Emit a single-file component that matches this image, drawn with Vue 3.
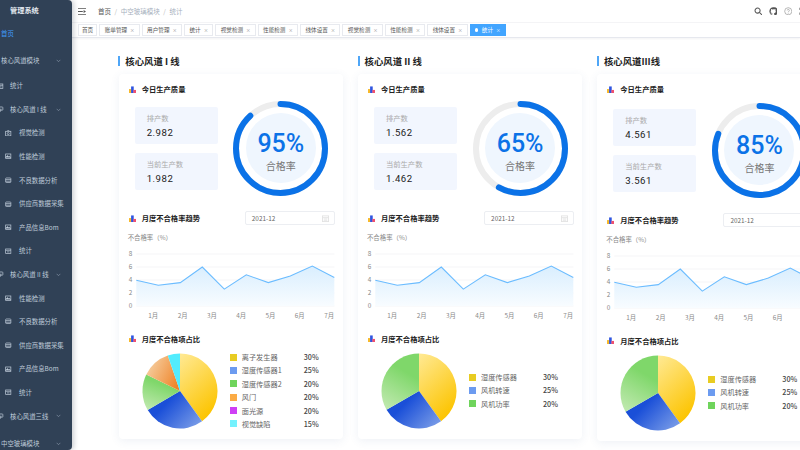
<script setup>
const menu = [
  { label: '首页', type: 'active' },
  { label: '核心风道模块', type: 'module', arrow: true },
  { label: '统计', type: 'sub', icon: 'doc' },
  { label: '核心风道 I 线', type: 'sub', icon: 'line', arrow: true },
  { label: '视觉检测', type: 'leaf', icon: 'camera' },
  { label: '性能检测', type: 'leaf', icon: 'image' },
  { label: '不良数据分析', type: 'leaf', icon: 'box' },
  { label: '供应商数据采集', type: 'leaf', icon: 'box' },
  { label: '产品信息Bom', type: 'leaf', icon: 'image' },
  { label: '统计', type: 'leaf', icon: 'doc' },
  { label: '核心风道 II 线', type: 'sub', icon: 'line', arrow: true },
  { label: '性能检测', type: 'leaf', icon: 'image' },
  { label: '不良数据分析', type: 'leaf', icon: 'box' },
  { label: '供应商数据采集', type: 'leaf', icon: 'box' },
  { label: '产品信息Bom', type: 'leaf', icon: 'image' },
  { label: '统计', type: 'leaf', icon: 'doc' },
  { label: '核心风道三线', type: 'sub', icon: 'line', arrow: true },
  { label: '中空玻璃模块', type: 'module', arrow: true },
]

const tags = ['账单管理', '用户管理', '统计', '视觉检测', '性能检测', '线体设置', '视觉检测', '性能检测', '线体设置']

const yellow = { color: '#e8cc22', fill: 'url(#pieYellow)' }
const blue = { color: '#6c9bf0', fill: 'url(#pieBlue)' }
const green = { color: '#6fd45c', fill: 'url(#pieGreen)' }
const orange = { color: '#fbab45', fill: 'url(#pieOrange)' }
const purple = { color: '#cf3ff5', fill: '#cf3ff5' }
const cyan = { color: '#74f1fd', fill: '#52ecfd' }

const shortLegend = [
  { name: '湿度传感器', pct: '30%', deg: 144, ...yellow },
  { name: '风机转速', pct: '25%', deg: 96, ...blue },
  { name: '风机功率', pct: '20%', deg: 120, ...green },
]

const lines = [
  {
    title: '核心风道 I 线', plan: '2.982', current: '1.982', rate: '95%', arc: 0.88,
    legend: [
      { name: '离子发生器', pct: '30%', deg: 144, ...yellow },
      { name: '湿度传感器1', pct: '25%', deg: 95.5, ...blue },
      { name: '湿度传感器2', pct: '20%', deg: 56.5, ...green },
      { name: '风门', pct: '20%', deg: 45, ...orange },
      { name: '面光源', pct: '20%', deg: 0, ...purple },
      { name: '视觉缺陷', pct: '15%', deg: 19, ...cyan },
    ],
  },
  { title: '核心风道 II 线', plan: '1.562', current: '1.462', rate: '65%', arc: 0.58, legend: shortLegend },
  { title: '核心风道III线', plan: '4.561', current: '3.561', rate: '85%', arc: 0.81, legend: shortLegend, tall: true },
]

const ticks = [8, 6, 4, 2, 0]
const months = ['1月', '2月', '3月', '4月', '5月', '6月', '7月']
const rates = [3.95, 3.2, 3.6, 6, 2.6, 4.8, 3.6, 4.6, 6.15, 4.4]

const plotX = (i) => 17.3 + i * 22
const plotY = (v) => 75 - v * 6.5
const linePoints = rates.map((v, i) => `${plotX(i)},${plotY(v)}`).join(' ')
const areaPoints = `${plotX(0)},${plotY(0)} ${linePoints} ${plotX(9)},${plotY(0)}`

const RING = 2 * Math.PI * 44.5

// slices start at 12 o'clock and run clockwise
function slices(legend) {
  let from = 0
  const out = []
  for (const item of legend) {
    if (item.deg > 0) {
      const a = ((from - 90) * Math.PI) / 180
      const b = ((from + item.deg - 90) * Math.PI) / 180
      const large = item.deg > 180 ? 1 : 0
      out.push({
        fill: item.fill,
        d: `M38 38L${38 + 37.5 * Math.cos(a)} ${38 + 37.5 * Math.sin(a)}A37.5 37.5 0 ${large} 1 ${38 + 37.5 * Math.cos(b)} ${38 + 37.5 * Math.sin(b)}Z`,
      })
    }
    from += item.deg
  }
  return out
}
</script>

<template>
  <div class="app">
    <aside class="sidebar">
      <div class="logo">管理系统</div>
      <div v-for="(item, i) in menu" :key="i" class="menu-item" :class="item.type">
        <svg v-if="item.icon" class="menu-icon" viewBox="0 0 10 10" fill="none" stroke="#bfcbd9" stroke-width="1.1">
          <template v-if="item.icon === 'doc'">
            <rect x="1" y="1.5" width="8" height="7" />
            <path d="M1 3.6h8M3 6h4" />
          </template>
          <template v-else-if="item.icon === 'line'">
            <rect x="1" y="1.5" width="8" height="5" rx="1" />
            <path d="M5 6.5v2.5M3 5h4" />
          </template>
          <template v-else-if="item.icon === 'camera'">
            <rect x="1" y="2" width="8" height="7" />
            <circle cx="5" cy="5.5" r="1.6" />
            <path d="M3.5 1h3" />
          </template>
          <template v-else-if="item.icon === 'image'">
            <rect x="1" y="1.5" width="8" height="7" />
            <path d="M1 7l2.8-3 2 2 1-1L9 7" fill="#bfcbd9" />
          </template>
          <template v-else>
            <rect x="1" y="1.5" width="8" height="7" rx="1" />
            <path d="M1 4h8M1 6.5h8" />
          </template>
        </svg>
        <span class="menu-label">{{ item.label }}</span>
        <svg v-if="item.arrow" class="menu-arrow" viewBox="0 0 8 5" fill="none" stroke="#8f9db0" stroke-width="1">
          <path d="M1 1l3 3 3-3" />
        </svg>
      </div>
    </aside>

    <div class="main">
      <header class="navbar">
        <svg class="hamburger" viewBox="0 0 10 8" fill="#555">
          <path d="M0 0h10v1H0zM0 3.5h6v1H0zM0 7h10v1H0zM7 2.2l3 1.8-3 1.8z" />
        </svg>
        <span class="crumb">首页</span>
        <span class="crumb-sep">/</span>
        <span class="crumb muted">中空玻璃模块</span>
        <span class="crumb-sep">/</span>
        <span class="crumb muted">统计</span>
        <div class="nav-icons">
          <svg viewBox="0 0 10 10" fill="none" stroke="#555" stroke-width="1.2">
            <circle cx="4.2" cy="4.2" r="3" />
            <path d="M6.4 6.4L9.4 9.4" />
          </svg>
          <svg viewBox="0 0 10 10" fill="#555">
            <path d="M5 .4a4.7 4.7 0 0 0-1.5 9.1c.2 0 .3-.1.3-.2V8.5c-1.3.3-1.6-.6-1.6-.6-.2-.5-.5-.7-.5-.7-.4-.3 0-.3 0-.3.5 0 .7.5.7.5.4.7 1.1.5 1.4.4 0-.3.2-.5.3-.6-1-.1-2.1-.5-2.1-2.3 0-.5.2-.9.5-1.2 0-.1-.2-.6 0-1.3 0 0 .4-.1 1.3.5a4.5 4.5 0 0 1 2.4 0c.9-.6 1.3-.5 1.3-.5.2.7.1 1.2 0 1.3.3.3.5.7.5 1.2 0 1.8-1.1 2.2-2.1 2.3.2.1.3.4.3.8v1.6c0 .1.1.2.3.2A4.7 4.7 0 0 0 5 .4z" />
          </svg>
          <svg viewBox="0 0 10 10" fill="none" stroke="#888" stroke-width=".7">
            <circle cx="5" cy="5" r="4.2" />
            <path d="M3.8 4c0-1.6 2.5-1.6 2.5 0 0 1-1.3 1-1.3 2.2M5 7v.8" />
          </svg>
          <svg viewBox="0 0 10 10" fill="none" stroke="#666" stroke-width="1">
            <path d="M1 3.5V1h2.5M6.5 1H9v2.5M9 6.5V9H6.5M3.5 9H1V6.5" />
          </svg>
        </div>
      </header>

      <nav class="tags">
        <span class="tag home">首页</span>
        <span v-for="(tag, i) in tags" :key="i" class="tag">{{ tag }}<i class="close">×</i></span>
        <span class="tag current"><i class="dot"></i>统计<i class="close">×</i></span>
      </nav>

      <div class="board">
        <section v-for="line in lines" :key="line.title" class="column" :class="{ tall: line.tall }">
          <h2 class="line-title">{{ line.title }}</h2>
          <div class="card">
            <div class="head">
              <svg class="head-icon" viewBox="0 0 8 8">
                <rect x="0" y="3.5" width="3" height="4.5" fill="#f7b92b" />
                <rect x="2.4" y="0.5" width="3" height="7.5" fill="#2f55e0" />
                <rect x="5" y="4.5" width="3" height="3.5" fill="#f0506e" />
              </svg>
              今日生产质量
            </div>
            <div class="quality">
              <div class="stats">
                <div class="stat">
                  <span class="stat-label">排产数</span>
                  <span class="stat-value">{{ line.plan }}</span>
                </div>
                <div class="stat">
                  <span class="stat-label">当前生产数</span>
                  <span class="stat-value">{{ line.current }}</span>
                </div>
              </div>
              <div class="donut">
                <svg viewBox="0 0 95 95" class="donut-ring">
                  <circle cx="47.5" cy="47.5" r="44.5" fill="none" stroke="#ededed" stroke-width="6" />
                  <circle
                    cx="47.5"
                    cy="47.5"
                    r="44.5"
                    fill="none"
                    stroke="#0b72e7"
                    stroke-width="6"
                    stroke-linecap="round"
                    transform="rotate(-90 47.5 47.5)"
                    :stroke-dasharray="`${RING * line.arc} ${RING}`"
                  />
                </svg>
                <div class="donut-center">
                  <span class="rate">{{ line.rate }}</span>
                  <span class="rate-label">合格率</span>
                </div>
              </div>
            </div>

            <div class="head trend-head">
              <svg class="head-icon" viewBox="0 0 8 8">
                <rect x="0" y="3.5" width="3" height="4.5" fill="#f7b92b" />
                <rect x="2.4" y="0.5" width="3" height="7.5" fill="#2f55e0" />
                <rect x="5" y="4.5" width="3" height="3.5" fill="#f0506e" />
              </svg>
              月度不合格率趋势
              <div class="date-input">
                2021-12
                <svg viewBox="0 0 8 8" fill="none" stroke="#e2e2e2" stroke-width="1">
                  <rect x=".5" y="1" width="7" height="6.5" />
                  <path d="M.5 3h7M2 4.5h4M2 6h4" />
                </svg>
              </div>
            </div>
            <div class="axis-name">不合格率（%）</div>
            <svg class="trend" viewBox="0 0 224 86">
              <defs>
                <linearGradient :id="`area${line.plan}`" x1="0" y1="0" x2="0" y2="1">
                  <stop offset="0" stop-color="#d9eefe" />
                  <stop offset="1" stop-color="#f8fcff" />
                </linearGradient>
              </defs>
              <line v-for="t in ticks" :key="t" x1="17.3" x2="215.3" :y1="plotY(t)" :y2="plotY(t)" stroke="#f0f1f4" stroke-width=".7" />
              <polygon :points="areaPoints" :fill="`url(#area${line.plan})`" />
              <polyline :points="linePoints" fill="none" stroke="#6bbcff" stroke-width="1.1" />
              <text v-for="t in ticks" :key="t" x="11.5" :y="plotY(t) + 2.3" class="tick" text-anchor="middle">{{ t }}</text>
              <text v-for="(m, i) in months" :key="m" :x="34.3 + i * 29.3" y="86.6" class="tick" text-anchor="middle">{{ m }}</text>
            </svg>

            <div class="head pie-head">
              <svg class="head-icon" viewBox="0 0 8 8">
                <rect x="0" y="3.5" width="3" height="4.5" fill="#f7b92b" />
                <rect x="2.4" y="0.5" width="3" height="7.5" fill="#2f55e0" />
                <rect x="5" y="4.5" width="3" height="3.5" fill="#f0506e" />
              </svg>
              月度不合格项占比
            </div>
            <div class="pie-row">
              <svg class="pie" viewBox="0 0 76 76">
                <path v-for="(s, i) in slices(line.legend)" :key="i" :d="s.d" :fill="s.fill" />
              </svg>
              <ul class="legend">
                <li v-for="item in line.legend" :key="item.name">
                  <i class="swatch" :style="{ background: item.color }"></i>
                  <span class="legend-name">{{ item.name }}</span>
                  <span class="legend-pct">{{ item.pct }}</span>
                </li>
              </ul>
            </div>
          </div>
        </section>
      </div>
    </div>

    <svg class="defs" width="0" height="0">
      <defs>
        <linearGradient id="pieYellow" x1="0.1" y1="0" x2="0.6" y2="1">
          <stop offset="0" stop-color="#ffe88f" />
          <stop offset="1" stop-color="#fcc400" />
        </linearGradient>
        <linearGradient id="pieBlue" x1="0.1" y1="0.3" x2="1" y2="0.9">
          <stop offset="0.2" stop-color="#1a4fd8" />
          <stop offset="1" stop-color="#7d9fe8" />
        </linearGradient>
        <linearGradient id="pieGreen" x1="0.7" y1="0" x2="0.3" y2="1">
          <stop offset="0.3" stop-color="#7fd76a" />
          <stop offset="1" stop-color="#bce8ab" />
        </linearGradient>
        <linearGradient id="pieOrange" x1="0" y1="0.2" x2="1" y2="0.7">
          <stop offset="0" stop-color="#f6d3a8" />
          <stop offset="1" stop-color="#ef8428" />
        </linearGradient>
      </defs>
    </svg>
  </div>
</template>

<style scoped>
.app {
  display: flex;
  width: 800px;
  height: 450px;
  overflow: hidden;
  position: relative;
  background: #fff;
  font-family: "Noto Sans CJK SC", "Noto Sans", sans-serif;
  color: #222;
}
.defs {
  position: absolute;
}

/* sidebar */
.sidebar {
  flex: 0 0 72px;
  height: 450px;
  background: #304156;
  border-radius: 0 4px 4px 0;
  box-shadow: 2px 0 5px rgba(0, 21, 41, 0.2);
  overflow: hidden;
  position: relative;
  z-index: 2;
  color: #bfcbd9;
  font-size: 6.4px;
}
.logo {
  height: 21px;
  line-height: 21px;
  padding-left: 10px;
  font-size: 7.2px;
  font-weight: 700;
  color: #e4e9ef;
}
.menu-item {
  display: flex;
  align-items: center;
  height: 23.6px;
  white-space: nowrap;
  position: relative;
}
.menu-item.active {
  height: 24px;
  padding-left: 1px;
  color: #409eff;
}
.menu-item.module {
  height: 27px;
  padding-left: 1px;
  margin-top: 2px;
}
.menu-item.sub {
  padding-left: 10px;
}
.menu-item.leaf {
  padding-left: 19px;
}
.menu-icon {
  position: absolute;
  width: 6.5px;
  height: 6.5px;
}
.menu-item.sub .menu-icon {
  left: -3px;
}
.menu-item.leaf .menu-icon {
  left: 5px;
}
.menu-arrow {
  position: absolute;
  left: 56px;
  width: 5px;
  height: 3.5px;
}

/* navbar and tags */
.main {
  flex: 1;
  min-width: 0;
  display: flex;
  flex-direction: column;
}
.navbar {
  display: flex;
  align-items: center;
  height: 22px;
  padding-left: 6px;
  font-size: 6.5px;
}
.hamburger {
  width: 8px;
  height: 7px;
  margin-right: 12px;
}
.crumb {
  color: #555;
}
.crumb.muted {
  color: #a6b0bd;
}
.crumb-sep {
  margin: 0 3.6px;
  color: #bbb;
}
.nav-icons {
  margin-left: auto;
  display: flex;
  align-items: center;
  gap: 6.4px;
  margin-right: -7px;
}
.nav-icons svg {
  width: 8.5px;
  height: 8.5px;
}
.tags {
  display: flex;
  align-items: center;
  gap: 2px;
  height: 16px;
  padding-left: 6px;
  background: #fff;
  border-top: 1px solid #f4f4f6;
  border-bottom: 1px solid #e6e8ee;
  box-shadow: 0 1px 2px rgba(0, 21, 41, 0.05);
  box-sizing: border-box;
  font-size: 5.6px;
  color: #555;
  white-space: nowrap;
}
.tag {
  display: flex;
  align-items: center;
  box-sizing: border-box;
  height: 12px;
  padding: 0 4.5px;
  border: 0.5px solid #e8eaef;
}
.tag.home {
  padding: 0 3px;
}
.tag.current {
  background: #42a5ff;
  border-color: #42a5ff;
  color: #fff;
}
.dot {
  width: 3.4px;
  height: 3.4px;
  margin-right: 3.4px;
  border-radius: 50%;
  background: #fff;
}
.close {
  margin-left: 3px;
  width: 4px;
  font-style: normal;
  font-size: 4.5px;
  text-align: center;
  color: #999;
}
.tag.current .close {
  color: #e4f1ff;
}

/* columns */
.board {
  display: flex;
  gap: 14.8px;
  padding: 18px 0 0 46.3px;
}
.column {
  flex: 0 0 224.5px;
  min-width: 0;
}
.line-title {
  margin: 0 0 8px;
  height: 10px;
  line-height: 10px;
  padding-left: 5px;
  border-left: 2px solid #4fa6f7;
  font-size: 9.4px;
  font-weight: 700;
  color: #222;
  white-space: nowrap;
}
.card {
  margin-left: 0.4px;
  padding: 9px 9px 10px 10px;
  background: #fff;
  border-radius: 4px;
  box-shadow: 0 2px 10px rgba(70, 100, 160, 0.09);
}
.head {
  display: flex;
  align-items: center;
  height: 12px;
  font-size: 7.3px;
  font-weight: 700;
  color: #222;
  white-space: nowrap;
}
.head-icon {
  width: 7px;
  height: 7px;
  margin-right: 6px;
}

/* quality */
.quality {
  display: flex;
  align-items: center;
  justify-content: space-between;
  height: 95px;
  margin-top: 5.5px;
  padding: 0 5.5px 0 6px;
}
.column.tall .quality {
  margin-top: 7.5px;
  margin-bottom: 2px;
}
.stats {
  display: flex;
  flex-direction: column;
  gap: 9px;
  margin-top: 1px;
}
.stat {
  display: flex;
  flex-direction: column;
  justify-content: center;
  gap: 4px;
  box-sizing: border-box;
  width: 83px;
  height: 37px;
  padding-left: 12px;
  background: #f2f6fe;
  border-radius: 2px;
}
.stat-label {
  font-size: 7.3px;
  line-height: 9px;
  color: #aaa;
}
.stat-value {
  font-family: Roboto, sans-serif;
  font-size: 9.6px;
  line-height: 11px;
  letter-spacing: 0.5px;
  color: #222;
}
.donut {
  position: relative;
  width: 95px;
  height: 95px;
}
.donut-ring {
  display: block;
  width: 95px;
  height: 95px;
}
.donut-center {
  position: absolute;
  left: 12.5px;
  top: 12.5px;
  box-sizing: border-box;
  width: 70px;
  height: 70px;
  padding-top: 6.5px;
  border-radius: 50%;
  background: #eff6fe;
  display: flex;
  flex-direction: column;
  align-items: center;
  justify-content: center;
}
.rate {
  font-family: Roboto, sans-serif;
  font-size: 25px;
  line-height: 26px;
  font-weight: 500;
  color: #0b72e7;
}
.rate-label {
  margin-top: 1.5px;
  font-size: 10px;
  line-height: 13px;
  color: #777;
}

/* trend */
.trend-head {
  margin-top: 15.5px;
  height: 14px;
}
.date-input {
  display: flex;
  align-items: center;
  justify-content: space-between;
  box-sizing: border-box;
  width: 90px;
  height: 14px;
  margin: 0 -1px 0 auto;
  padding: 0 5px 0 6px;
  border: 0.5px solid #eceef2;
  border-radius: 2px;
  font-size: 6.4px;
  font-weight: 400;
  color: #666;
}
.date-input svg {
  width: 7px;
  height: 7px;
}
.axis-name {
  height: 9px;
  line-height: 9px;
  margin: 7.5px 0 0 -1px;
  font-size: 6.4px;
  color: #888;
}
.trend {
  display: block;
  width: 224px;
  height: 86px;
  margin: -11px -9px 0 -10px;
  overflow: visible;
}
.tick {
  font-family: "Noto Sans CJK SC", sans-serif;
  font-size: 6.4px;
  fill: #888;
}

/* pie */
.pie-head {
  margin-top: 16px;
}
.pie-row {
  display: flex;
  align-items: center;
  height: 76px;
  margin-top: 8px;
  padding-left: 13px;
}
.pie {
  flex: 0 0 76px;
  width: 76px;
  height: 76px;
}
.legend {
  list-style: none;
  margin: 0 0 0 12px;
  padding: 0;
}
.legend li {
  display: flex;
  align-items: center;
  height: 13.4px;
  font-size: 7.2px;
  color: #666;
  white-space: nowrap;
}
.swatch {
  width: 7px;
  height: 7px;
  margin-right: 5px;
}
.legend-name {
  width: 62px;
}
.legend-pct {
  font-weight: 500;
  color: #444;
}
</style>
